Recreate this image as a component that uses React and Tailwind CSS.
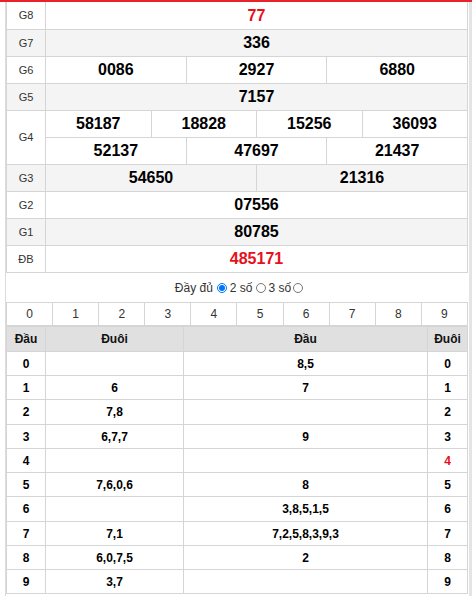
import React from "react";

const B = "border-[#d5d5d5]";

function Label({ children }) {
  return (
    <div className={`w-[39px] shrink-0 border-r ${B} flex items-center justify-center text-[11px] text-[#333]`}>
      {children}
    </div>
  );
}

function Cells({ items, red }) {
  return (
    <div className="flex flex-1">
      {items.map((n, i) => (
        <div
          key={i}
          className={`flex-1 flex items-center justify-center text-[16px] font-bold ${i > 0 ? `border-l ${B}` : ""} ${red ? "text-[#e8101a]" : "text-black"}`}
        >
          {n}
        </div>
      ))}
    </div>
  );
}

function Row({ label, items, red, gray, h = "h-[27px]" }) {
  return (
    <div className={`flex ${h} border-b ${B} ${gray ? "bg-[#f4f4f4]" : "bg-white"}`}>
      <Label>{label}</Label>
      <Cells items={items} red={red} />
    </div>
  );
}

const loto = [
  ["0", "", "8,5", "0"],
  ["1", "6", "7", "1"],
  ["2", "7,8", "", "2"],
  ["3", "6,7,7", "9", "3"],
  ["4", "", "", "4"],
  ["5", "7,6,0,6", "8", "5"],
  ["6", "", "3,8,5,1,5", "6"],
  ["7", "7,1", "7,2,5,8,3,9,3", "7"],
  ["8", "6,0,7,5", "2", "8"],
  ["9", "3,7", "", "9"],
];
const heights = ["h-[24px]", "h-[24px]", "h-[25px]", "h-[24px]", "h-[24px]", "h-[24px]", "h-[25px]", "h-[24px]", "h-[24px]", "h-[24px]"];

export default function App() {
  return (
    <div className="w-[472px] h-[598px] bg-white" style={{ fontFamily: '"Liberation Sans", Arial, sans-serif' }}>
      <div className="h-[2px] bg-[#e8212b]" />
      <div className="ml-[5px] w-[467px] border-l border-l-[#dcdcdc] border-r-[3px] border-r-[#e4e4e4] pr-[1px] h-[594px]">
        <div className={`border-x ${B}`}>
          <Row label="G8" items={["77"]} red h="h-[28px]" />
          <Row label="G7" items={["336"]} gray />
          <Row label="G6" items={["0086", "2927", "6880"]} />
          <Row label="G5" items={["7157"]} gray />
          <div className={`flex h-[54px] border-b ${B}`}>
            <Label>G4</Label>
            <div className="flex flex-col flex-1">
              <div className={`flex h-[27px] border-b ${B}`}>
                <Cells items={["58187", "18828", "15256", "36093"]} />
              </div>
              <div className="flex h-[26px]">
                <Cells items={["52137", "47697", "21437"]} />
              </div>
            </div>
          </div>
          <Row label="G3" items={["54650", "21316"]} gray />
          <Row label="G2" items={["07556"]} />
          <Row label="G1" items={["80785"]} gray />
          <Row label="ĐB" items={["485171"]} red />
        </div>

        <div className="h-[29px] flex items-center justify-center text-[12px] text-[#333] pl-[4px] pt-[1px]">
          <span>Đầy đủ</span>
          <input type="radio" name="r" defaultChecked className="w-[10px] h-[10px] m-0 ml-[4px] mr-[3px]" />
          <span>2 số</span>
          <input type="radio" name="r" className="w-[10px] h-[10px] m-0 ml-[3px] mr-[3px]" />
          <span>3 số</span>
          <input type="radio" name="r" className="w-[10px] h-[10px] m-0 ml-[2px]" />
        </div>

        <div className={`border-x border-t ${B}`}>
          <div className={`flex h-[24px] border-b-2 ${B}`}>
            {["0", "1", "2", "3", "4", "5", "6", "7", "8", "9"].map((d, i) => (
              <div key={d} className={`flex-1 flex items-center justify-center text-[12px] text-[#333] ${i > 0 ? `border-l ${B}` : ""}`}>
                {d}
              </div>
            ))}
          </div>
          <div className={`flex h-[25px] border-b ${B} bg-[#e0e0e0] text-[12px] font-bold text-[#111]`}>
            <div className={`w-[39px] border-r ${B} flex items-center justify-center`}>Đầu</div>
            <div className={`w-[138px] border-r ${B} flex items-center justify-center`}>Đuôi</div>
            <div className={`flex-1 border-r ${B} flex items-center justify-center`}>Đầu</div>
            <div className="w-[39px] flex items-center justify-center">Đuôi</div>
          </div>
          {loto.map((r, i) => (
            <div key={i} className={`flex ${heights[i]} border-b ${B} text-[12px] font-bold text-black`}>
              <div className={`w-[39px] border-r ${B} flex items-center justify-center`}>{r[0]}</div>
              <div className={`w-[138px] border-r ${B} flex items-center justify-center`}>{r[1]}</div>
              <div className={`flex-1 border-r ${B} flex items-center justify-center`}>{r[2]}</div>
              <div className={`w-[39px] flex items-center justify-center ${i === 4 ? "text-[#e8101a]" : ""}`}>{r[3]}</div>
            </div>
          ))}
        </div>
      </div>
    </div>
  );
}
